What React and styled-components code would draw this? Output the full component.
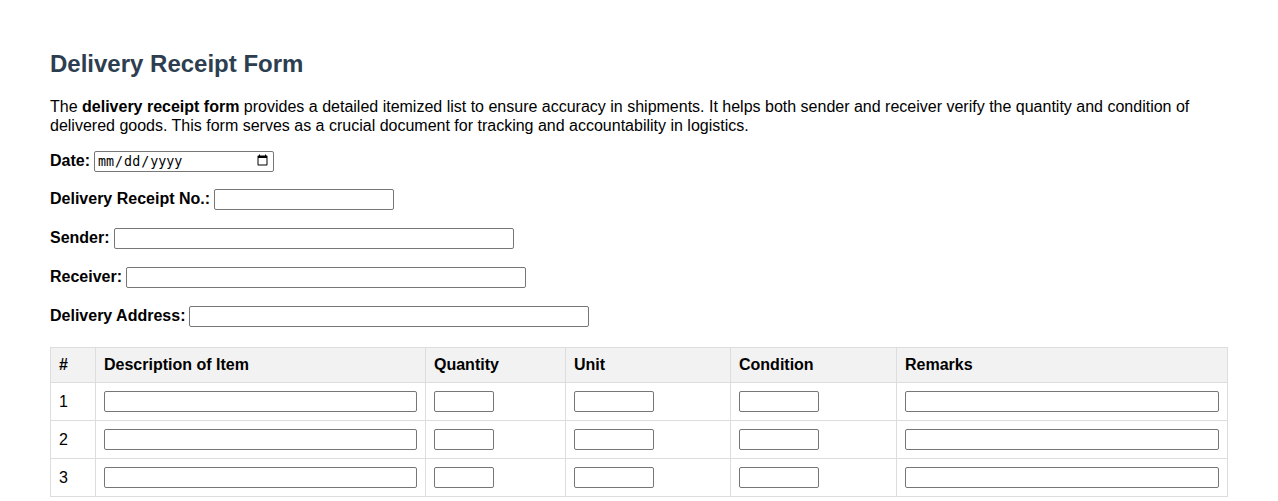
import React from 'react'
import styled, { createGlobalStyle } from 'styled-components'

const GlobalStyle = createGlobalStyle`
  body {
    margin: 0;
    background: #fff;
    font-family: "Liberation Sans", Arial, sans-serif;
    color: #000;
  }
`

const Page = styled.div`
  padding: 30px 50px;
`

const Title = styled.h2`
  font-size: 24px;
  font-weight: bold;
  color: #2c3e50;
  margin: 20px 0 19px;
`

const Intro = styled.p`
  font-size: 16px;
  line-height: 19px;
  margin: 0 0 15px;
`

const Field = styled.div`
  display: flex;
  align-items: center;
  height: 22px;
  margin-bottom: ${p => p.$gap || '17px'};
`

const Label = styled.label`
  font-size: 16px;
  font-weight: bold;
  margin-right: 4px;
`

const Input = styled.input`
  box-sizing: border-box;
  width: ${p => p.$w || '180px'};
  height: 21px;
  border: 1px solid #767676;
  border-radius: 2px;
  padding: 1px 2px;
  font-size: 13.33px;
`

const Table = styled.table`
  width: 100%;
  table-layout: fixed;
  border-collapse: collapse;
  margin-top: 20px;
  font-size: 16px;

  th, td {
    border: 1px solid #ddd;
    padding: 8px;
    text-align: left;
  }
  th {
    background: #f2f2f2;
    font-weight: bold;
  }
`

const CellInput = styled.input`
  box-sizing: border-box;
  width: ${p => p.$w || '100%'};
  height: 21px;
  border: 1px solid #767676;
  border-radius: 2px;
  padding: 1px 2px;
  display: block;
`

const fields = [
  { label: 'Delivery Receipt No.:', w: '180px' },
  { label: 'Sender:', w: '400px' },
  { label: 'Receiver:', w: '400px' },
  { label: 'Delivery Address:', w: '400px' },
]

export default function App() {
  return (
    <Page>
      <GlobalStyle />
      <Title>Delivery Receipt Form</Title>
      <Intro>
        The <b>delivery receipt form</b> provides a detailed itemized list to ensure accuracy in shipments. It helps both sender and receiver verify the quantity and condition of delivered goods. This form serves as a crucial document for tracking and accountability in logistics.
      </Intro>
      <Field $gap="16px">
        <Label>Date:</Label>
        <Input type="date" $w="180px" />
      </Field>
      {fields.map(f => (
        <Field key={f.label}>
          <Label>{f.label}</Label>
          <Input type="text" $w={f.w} />
        </Field>
      ))}
      <Table>
        <colgroup>
          <col style={{ width: 45 }} />
          <col style={{ width: 330 }} />
          <col style={{ width: 140 }} />
          <col style={{ width: 165 }} />
          <col style={{ width: 166 }} />
          <col />
        </colgroup>
        <thead>
          <tr>
            <th>#</th>
            <th>Description of Item</th>
            <th>Quantity</th>
            <th>Unit</th>
            <th>Condition</th>
            <th>Remarks</th>
          </tr>
        </thead>
        <tbody>
          {[1, 2, 3].map(n => (
            <tr key={n}>
              <td>{n}</td>
              <td><CellInput /></td>
              <td><CellInput $w="60px" /></td>
              <td><CellInput $w="80px" /></td>
              <td><CellInput $w="80px" /></td>
              <td><CellInput /></td>
            </tr>
          ))}
        </tbody>
      </Table>
    </Page>
  )
}
